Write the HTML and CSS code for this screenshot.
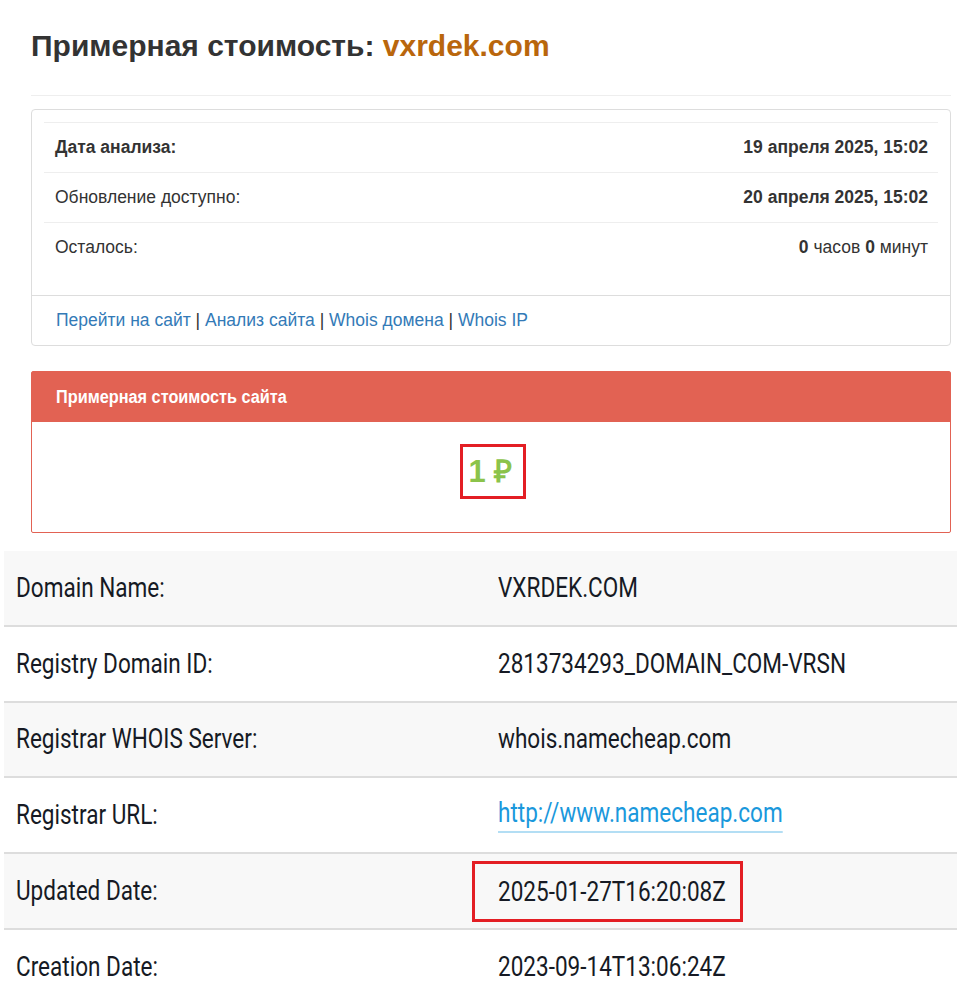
FILE: index.html
```html
<!DOCTYPE html>
<html lang="ru">
<head>
<meta charset="utf-8">
<title>Примерная стоимость: vxrdek.com</title>
<link rel="stylesheet" href="styles.css">
</head>
<body>
<div class="wrap">
  <h1 class="title">Примерная стоимость: <span class="domain">vxrdek.com</span></h1>
  <hr class="sep">
  <div class="card">
    <div class="card-body">
      <table class="info">
        <tr><td class="b">Дата анализа:</td><td class="r b">19 апреля 2025, 15:02</td></tr>
        <tr><td>Обновление доступно:</td><td class="r b">20 апреля 2025, 15:02</td></tr>
        <tr><td>Осталось:</td><td class="r"><b>0</b> часов <b>0</b> минут</td></tr>
      </table>
    </div>
    <div class="card-foot">
      <span><a href="#">Перейти на сайт</a> | <a href="#">Анализ сайта</a> | <a href="#">Whois домена</a> | <a href="#">Whois IP</a></span>
    </div>
  </div>
  <div class="panel">
    <div class="panel-head"><span class="cond">Примерная стоимость сайта</span></div>
    <div class="panel-body"><span class="price">1 ₽</span></div>
  </div>
</div>
<div class="whois">
  <div class="row alt"><div class="k"><span class="c">Domain Name:</span></div><div class="v"><span class="c">VXRDEK.COM</span></div></div>
  <div class="row"><div class="k"><span class="c">Registry Domain ID:</span></div><div class="v"><span class="c">2813734293_DOMAIN_COM-VRSN</span></div></div>
  <div class="row alt"><div class="k"><span class="c">Registrar WHOIS Server:</span></div><div class="v"><span class="c">whois.namecheap.com</span></div></div>
  <div class="row"><div class="k"><span class="c">Registrar URL:</span></div><div class="v"><a class="c link" href="#">http://www.namecheap.com</a></div></div>
  <div class="row alt"><div class="k"><span class="c">Updated Date:</span></div><div class="v"><span class="mark"><span class="c">2025-01-27T16:20:08Z</span></span></div></div>
  <div class="row"><div class="k"><span class="c">Creation Date:</span></div><div class="v"><span class="c">2023-09-14T13:06:24Z</span></div></div>
</div>
</body>
</html>
```
FILE: styles.css
```css
html, body { margin: 0; padding: 0; background: #fff; }
body { font-family: "Liberation Sans", Arial, sans-serif; color: #333; overflow: hidden; height: 991px; }
.wrap { padding: 29px 6px 0 31px; }
.title { margin: 0; font-size: 30px; line-height: 34px; font-weight: bold; color: #333; }
.domain { color: #b9660c; }
.sep { margin: 32px 0 13px; border: 0; border-top: 1px solid #eee; height: 0; }
.card { border: 1px solid #ddd; border-radius: 4px; }
.card-body { padding: 12px 12px 23px; }
.info { width: 100%; border-collapse: collapse; font-size: 17.5px; }
.info td { border-top: 1px solid #eee; padding: 0 10px 0 11px; height: 49px; vertical-align: middle; }
.info .r { text-align: right; }
.info .b, .info b { font-weight: bold; }
.card-foot { border-top: 1px solid #ddd; height: 49px; padding: 0 25px 0 24px; display: flex; align-items: center; font-size: 17.5px; color: #333; }
.card-foot a { color: #337ab7; text-decoration: none; }
.panel { margin-top: 25px; border: 1px solid #e26253; border-radius: 2px; }
.panel-head { background: #e26253; height: 50px; display: flex; align-items: center; padding: 0 25px 0 24px; color: #fff; font-weight: bold; font-size: 17.5px; }
.cond { display: inline-block; transform: scaleX(0.93); transform-origin: left center; }
.panel-body { height: 110px; display: flex; align-items: center; justify-content: center; }
.price { display: inline-block; border: 3px solid #e31e24; padding: 0 11px 0 6px; height: 49px; font-size: 31px; font-weight: bold; color: #8bc34a; line-height: 49px; margin-left: 4px; margin-top: -12px; white-space: nowrap; }
.whois { margin-top: 18px; margin-left: 4px; font-family: Roboto, "Liberation Sans", sans-serif; color: #161a24; font-size: 27px; }
.row { display: flex; height: 73.8px; align-items: center; border-bottom: 2px solid #ddd; }
.row.alt { background: #f8f8f8; }
.k { width: 482px; padding-left: 12px; }
.v { flex: 1; }
.c { display: inline-block; transform: scaleX(0.835); transform-origin: left center; white-space: nowrap; }
.link { color: #1a98dc; text-decoration: none; border-bottom: 2px solid #b3def4; padding-bottom: 2px; }
.mark { display: inline-block; border: 3px solid #e31e24; margin-left: -26px; padding: 12px 10px 11px 23px; width: 232px; }
```
